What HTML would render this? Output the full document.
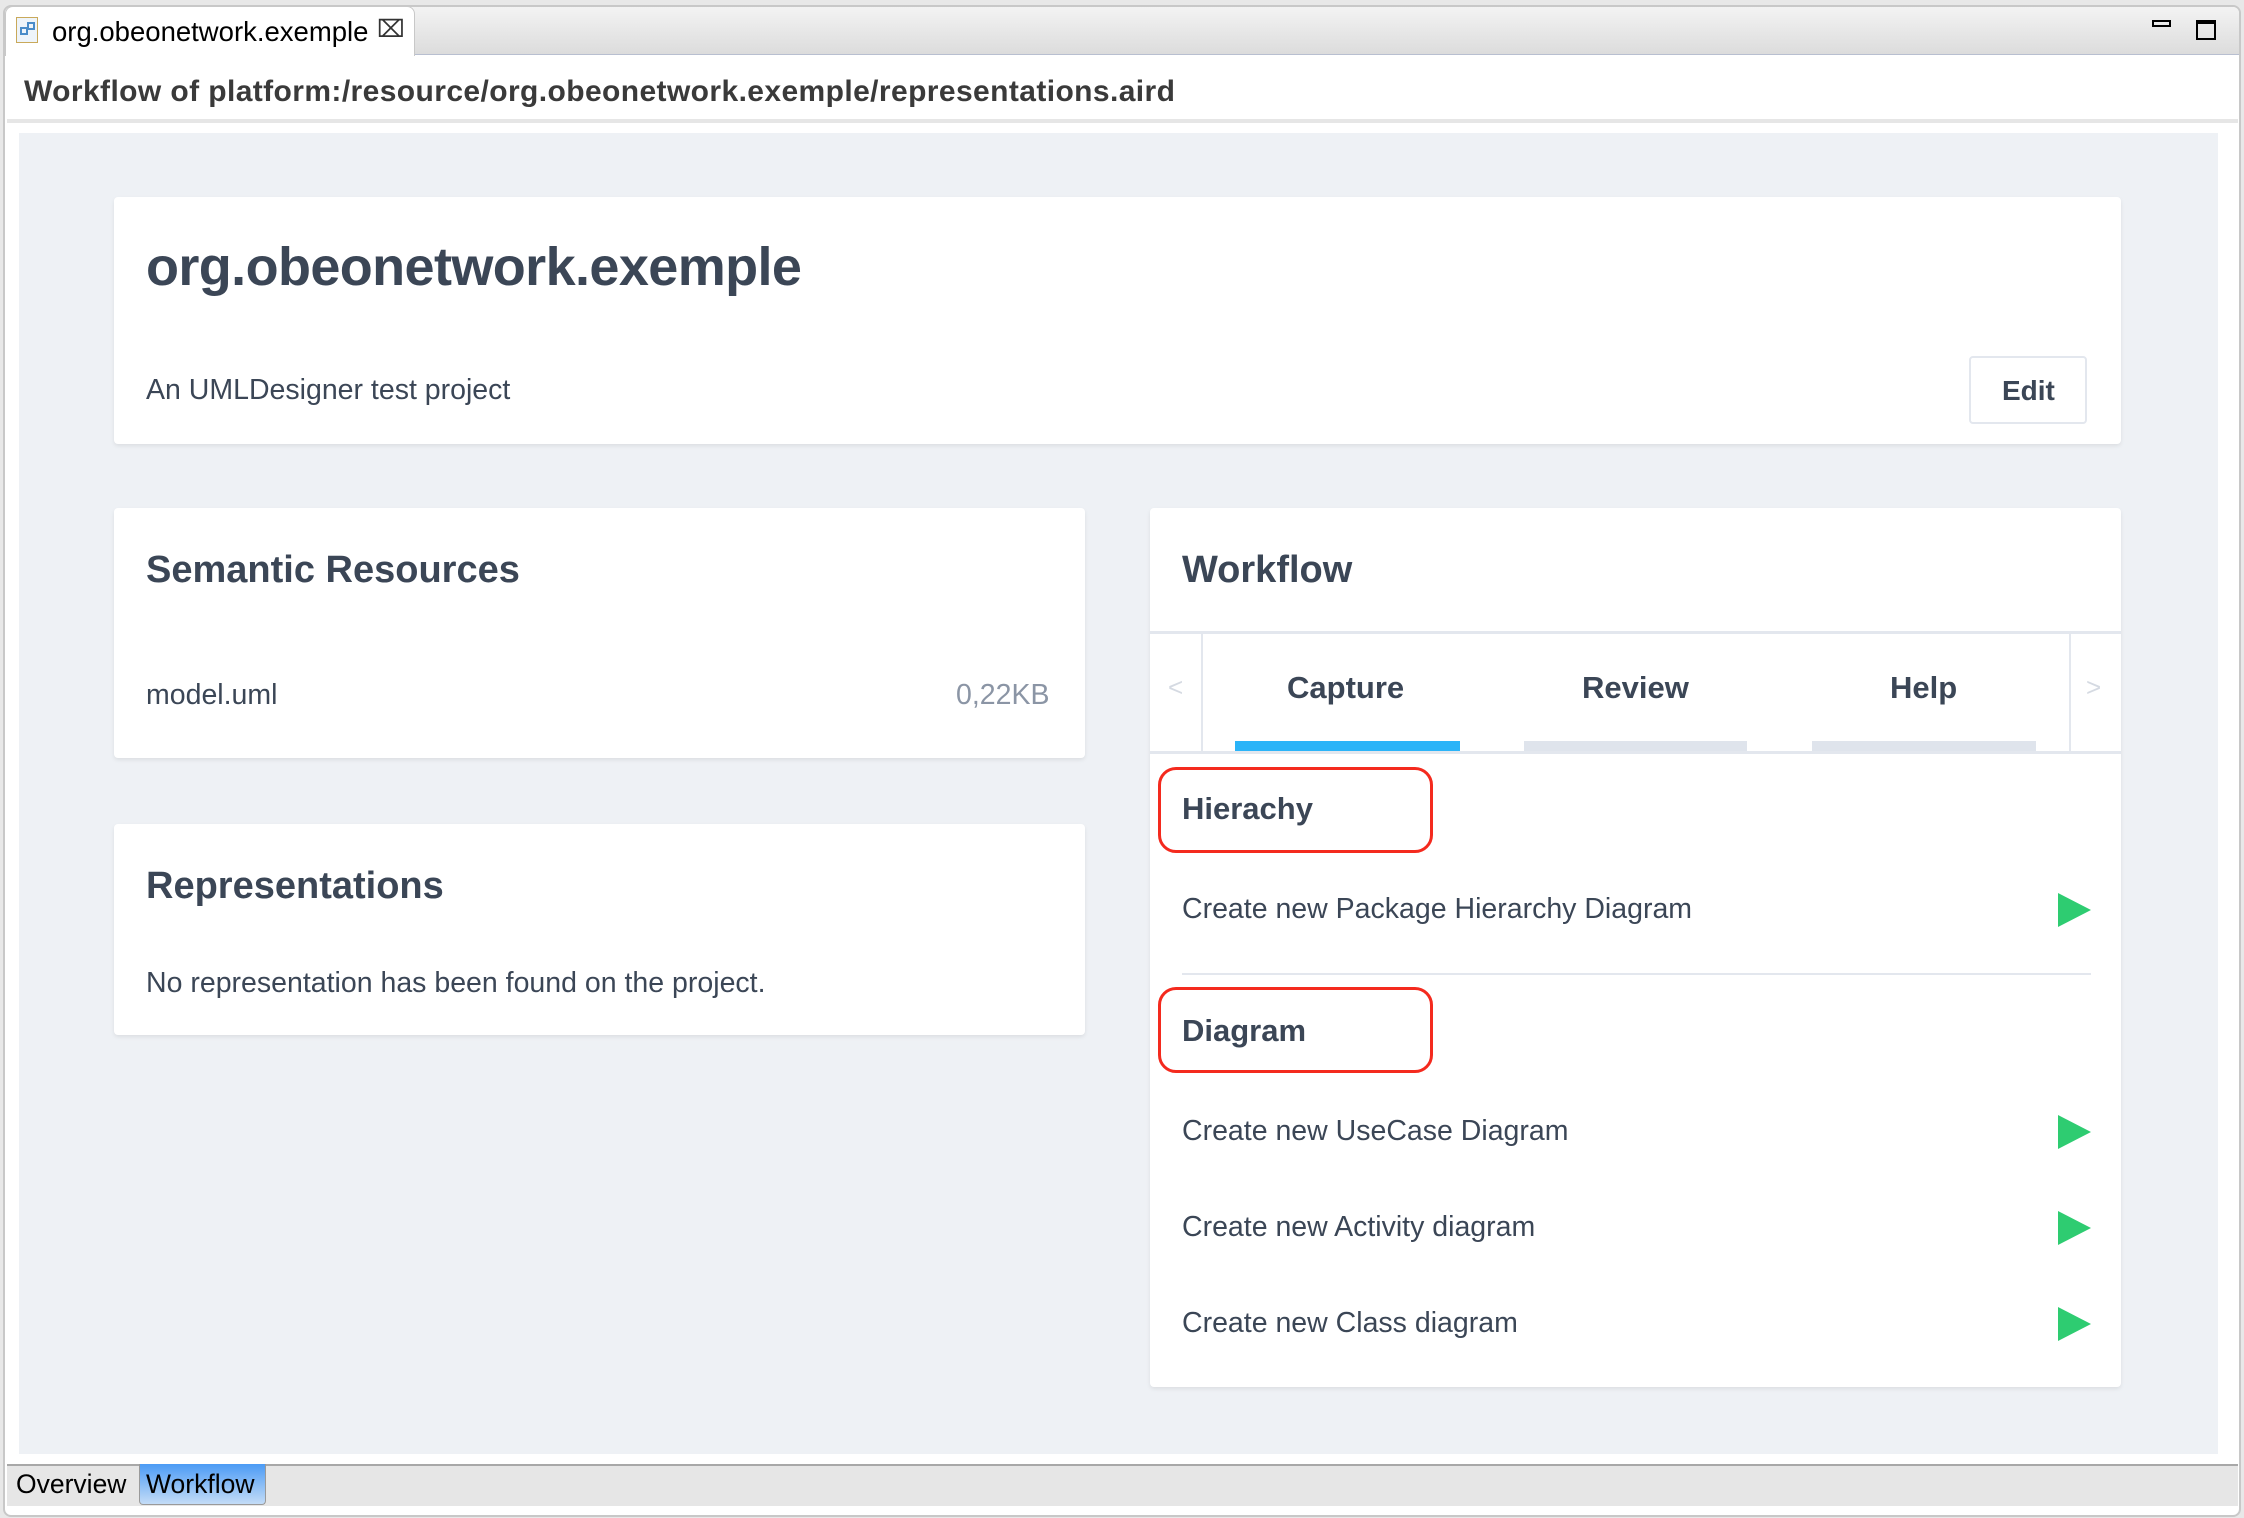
<!DOCTYPE html>
<html><head><meta charset="utf-8"><style>
*{margin:0;padding:0;box-sizing:border-box}
body{width:2244px;height:1518px;background:#e8e8e8;font-family:"Liberation Sans",sans-serif;position:relative;overflow:hidden;color:#3b4656}
.a{position:absolute}
.card{position:absolute;background:#fff;border-radius:4px;box-shadow:0 2px 4px rgba(0,0,0,0.08)}
.t{position:absolute;white-space:nowrap;line-height:1}
.tri{position:absolute;width:0;height:0;border-top:17px solid transparent;border-bottom:17px solid transparent;border-left:33px solid #2ecc71}
.red{position:absolute;border:3px solid #f42a1e;border-radius:18px}
.b{font-size:28.5px}
</style></head><body>
<div class="a" style="left:3px;top:5px;width:2238px;height:1512px;border:2px solid #c8c8c8;border-radius:8px;background:#fff"></div>
<div class="a" style="left:5px;top:7px;width:2234px;height:48px;background:linear-gradient(#f3f3f3,#dcdcdc);border-bottom:1px solid #b8bfd0;border-radius:6px 6px 0 0"></div>
<div class="a" style="left:5px;top:6px;width:410px;height:50px;background:#fff;border:1px solid #c8c8c8;border-bottom:none;border-radius:8px 8px 0 0"></div>
<div class="a" style="left:16px;top:17px;width:22px;height:26px;border:1px solid #c9a95a;background:#eef4fa"></div>
<div class="a" style="left:20px;top:27px;width:8px;height:8px;border:2px solid #4a8cc9"></div>
<div class="a" style="left:27px;top:22px;width:8px;height:8px;border:2px solid #4a8cc9"></div>
<div class="t" style="left:52px;top:18px;font-size:27.5px;color:#000">org.obeonetwork.exemple</div>
<div class="t" style="left:377px;top:18px;font-size:24px;color:#333">&#x2327;</div>
<div class="a" style="left:2152px;top:20px;width:19px;height:7px;border:2px solid #000"></div>
<div class="a" style="left:2196px;top:20px;width:20px;height:20px;border:2px solid #000;border-top-width:4px"></div>
<div class="t" style="left:24px;top:77px;font-size:30px;font-weight:bold;color:#3a3a3a;letter-spacing:0.4px">Workflow of platform:/resource/org.obeonetwork.exemple/representations.aird</div>
<div class="a" style="left:7px;top:119px;width:2231px;height:4px;background:#e6e6e6"></div>
<div class="a" style="left:19px;top:133px;width:2199px;height:1321px;background:#eef1f5"></div>
<div class="card" style="left:114px;top:197px;width:2007px;height:247px"></div>
<div class="t" style="left:146px;top:240px;font-size:54px;font-weight:bold;letter-spacing:-0.6px">org.obeonetwork.exemple</div>
<div class="t b" style="left:146px;top:376px">An UMLDesigner test project</div>
<div class="a" style="left:1969px;top:356px;width:118px;height:68px;border:2px solid #e3e7ee;border-radius:4px;background:#fff"></div>
<div class="t" style="left:2002px;top:377px;font-size:28px;font-weight:bold">Edit</div>
<div class="card" style="left:114px;top:508px;width:971px;height:250px"></div>
<div class="t" style="left:146px;top:551px;font-size:38px;font-weight:bold">Semantic Resources</div>
<div class="t b" style="left:146px;top:681px">model.uml</div>
<div class="t b" style="left:956px;top:681px;color:#8b95a5">0,22KB</div>
<div class="card" style="left:114px;top:824px;width:971px;height:211px"></div>
<div class="t" style="left:146px;top:867px;font-size:38px;font-weight:bold">Representations</div>
<div class="t b" style="left:146px;top:969px">No representation has been found on the project.</div>
<div class="card" style="left:1150px;top:508px;width:971px;height:879px"></div>
<div class="t" style="left:1182px;top:551px;font-size:38px;font-weight:bold">Workflow</div>
<div class="a" style="left:1150px;top:631px;width:971px;height:3px;background:#e3e7ee"></div>
<div class="a" style="left:1201px;top:634px;width:2px;height:117px;background:#e3e7ee"></div>
<div class="a" style="left:2069px;top:634px;width:2px;height:117px;background:#e3e7ee"></div>
<div class="t" style="left:1168px;top:674px;font-size:26px;color:#d5dae2">&lt;</div>
<div class="t" style="left:2086px;top:674px;font-size:26px;color:#d5dae2">&gt;</div>
<div class="t" style="left:1287px;top:672px;font-size:31px;font-weight:bold">Capture</div>
<div class="t" style="left:1582px;top:672px;font-size:31px;font-weight:bold">Review</div>
<div class="t" style="left:1890px;top:672px;font-size:31px;font-weight:bold">Help</div>
<div class="a" style="left:1235px;top:741px;width:225px;height:10px;background:#2bb4f8"></div>
<div class="a" style="left:1524px;top:741px;width:223px;height:10px;background:#dfe4ec"></div>
<div class="a" style="left:1812px;top:741px;width:224px;height:10px;background:#dfe4ec"></div>
<div class="a" style="left:1150px;top:751px;width:971px;height:3px;background:#e3e7ee"></div>
<div class="red" style="left:1158px;top:767px;width:275px;height:86px"></div>
<div class="t" style="left:1182px;top:793px;font-size:31px;font-weight:bold">Hierachy</div>
<div class="t b" style="left:1182px;top:895px">Create new Package Hierarchy Diagram</div>
<div class="tri" style="left:2058px;top:893px"></div>
<div class="a" style="left:1182px;top:973px;width:909px;height:2px;background:#e3e7ee"></div>
<div class="red" style="left:1158px;top:987px;width:275px;height:86px"></div>
<div class="t" style="left:1182px;top:1015px;font-size:31px;font-weight:bold">Diagram</div>
<div class="t b" style="left:1182px;top:1117px">Create new UseCase Diagram</div>
<div class="tri" style="left:2058px;top:1115px"></div>
<div class="t b" style="left:1182px;top:1213px">Create new Activity diagram</div>
<div class="tri" style="left:2058px;top:1211px"></div>
<div class="t b" style="left:1182px;top:1309px">Create new Class diagram</div>
<div class="tri" style="left:2058px;top:1307px"></div>
<div class="a" style="left:7px;top:1464px;width:2231px;height:42px;background:#e6e6e6;border-top:2px solid #a8a8a8"></div>
<div class="t" style="left:16px;top:1471px;font-size:26.5px;color:#000">Overview</div>
<div class="a" style="left:139px;top:1464px;width:127px;height:41px;background:linear-gradient(#4c9bf5,#c4dcf7);border:1px solid #9a9a9a;border-top:none;border-radius:0 0 4px 4px"></div>
<div class="t" style="left:146px;top:1471px;font-size:26.5px;color:#000">Workflow</div>
</body></html>
